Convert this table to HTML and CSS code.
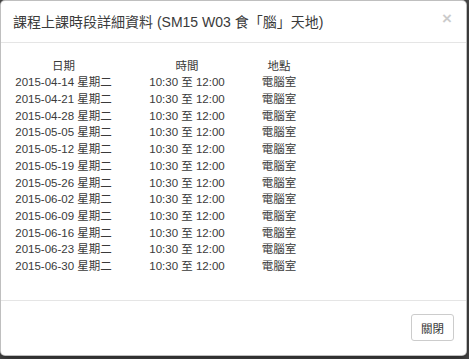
FILE: index.html
```html
<!DOCTYPE html>
<html lang="zh-Hant">
<head>
<meta charset="utf-8">
<title>課程上課時段詳細資料</title>
<link rel="stylesheet" href="styles.css">
</head>
<body>
<div class="modal">
  <div class="modal-header">
    <h4 class="modal-title">課程上課時段詳細資料 (SM15 W03 食「腦」天地)</h4>
    <span class="close">×</span>
  </div>
  <div class="modal-body">
    <div class="sched">
      <div class="th">日期</div><div class="th">時間</div><div class="th">地點</div>
      <div>2015-04-14 星期二</div><div>10:30 至 12:00</div><div>電腦室</div>
      <div>2015-04-21 星期二</div><div>10:30 至 12:00</div><div>電腦室</div>
      <div>2015-04-28 星期二</div><div>10:30 至 12:00</div><div>電腦室</div>
      <div>2015-05-05 星期二</div><div>10:30 至 12:00</div><div>電腦室</div>
      <div>2015-05-12 星期二</div><div>10:30 至 12:00</div><div>電腦室</div>
      <div>2015-05-19 星期二</div><div>10:30 至 12:00</div><div>電腦室</div>
      <div>2015-05-26 星期二</div><div>10:30 至 12:00</div><div>電腦室</div>
      <div>2015-06-02 星期二</div><div>10:30 至 12:00</div><div>電腦室</div>
      <div>2015-06-09 星期二</div><div>10:30 至 12:00</div><div>電腦室</div>
      <div>2015-06-16 星期二</div><div>10:30 至 12:00</div><div>電腦室</div>
      <div>2015-06-23 星期二</div><div>10:30 至 12:00</div><div>電腦室</div>
      <div>2015-06-30 星期二</div><div>10:30 至 12:00</div><div>電腦室</div>
    </div>
  </div>
  <div class="modal-footer">
    <button class="btn">關閉</button>
  </div>
</div>
</body>
</html>
```
FILE: styles.css
```css
html, body {
  margin: 0;
  padding: 0;
}
body {
  background: #4a4a4a;
  width: 469px;
  height: 359px;
  overflow: hidden;
  font-family: "Liberation Sans", Arial, "Noto Sans CJK TC", sans-serif;
  color: #333;
}
.modal {
  width: 467px;
  height: 356px;
  box-sizing: border-box;
  background: #fff;
  border: 1px solid rgba(0,0,0,0.25);
  border-radius: 5px;
  box-shadow: 0 3px 9px rgba(0,0,0,0.5);
  display: flex;
  flex-direction: column;
  position: relative;
}
.modal-header {
  height: 42px;
  box-sizing: border-box;
  padding: 12px 12px;
  border-bottom: 1px solid #e5e5e5;
  display: flex;
  align-items: center;
}
.modal-title {
  margin: 0;
  font-size: 14px;
  font-weight: normal;
  line-height: 18px;
  flex: 1;
  color: #3a3a3a;
}
.close {
  font-size: 17px;
  font-weight: bold;
  color: #000;
  opacity: 0.2;
  line-height: 1;
  margin-right: 2px;
  margin-top: -6px;
}
.modal-body {
  flex: 1;
  padding: 14.6px 12px 0 12px;
}
.sched {
  display: grid;
  grid-template-columns: 101px 146px 38px;
  font-size: 11.5px;
  line-height: 16.7px;
  text-align: center;
  white-space: nowrap;
  color: #3a3a3a;
}
.th {
  font-weight: normal;
}
.modal-footer {
  height: 55px;
  box-sizing: border-box;
  border-top: 1px solid #e5e5e5;
  padding: 13px 12px;
  display: flex;
  justify-content: flex-end;
  align-items: flex-start;
}
.btn {
  width: 43px;
  height: 27px;
  background: #fff;
  border: 1px solid #ccc;
  border-radius: 3px;
  font-family: "Liberation Sans", "Noto Sans CJK TC", sans-serif;
  font-size: 11.5px;
  color: #333;
  padding: 0;
}
```
